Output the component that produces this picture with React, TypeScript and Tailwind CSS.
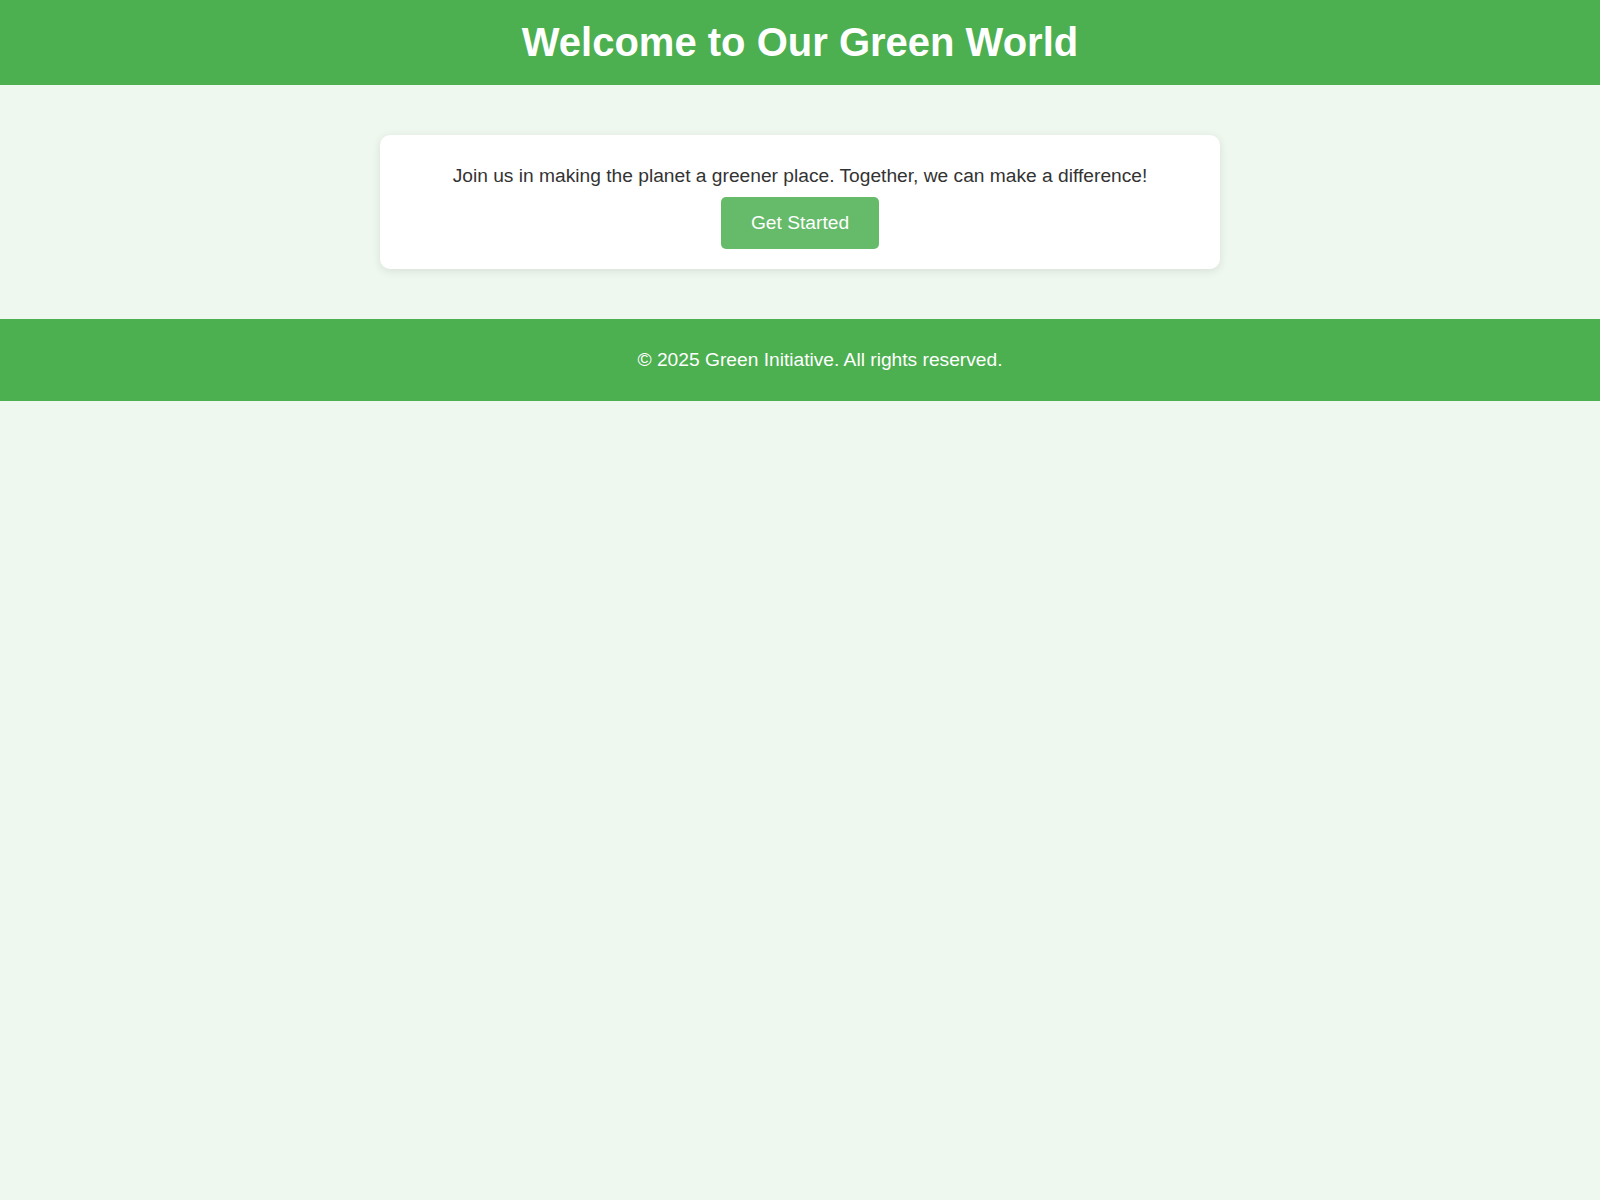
export default function App() {
  return (
    <div className="min-h-screen bg-[#eff8ef] font-['Liberation_Sans',Arial,sans-serif] text-[#333]">
      <header className="bg-[#4caf50] py-5 text-center text-white">
        <h1 className="m-0 text-[40px] font-bold leading-[45px]">Welcome to Our Green World</h1>
      </header>

      <main className="mx-auto my-[50px] w-[840px] rounded-[10px] bg-white p-5 text-center shadow-[0_2px_10px_rgba(0,0,0,0.1)]">
        <p className="my-[10px] text-[19.2px] leading-[22px]">
          Join us in making the planet a greener place. Together, we can make a difference!
        </p>
        <button className="rounded-[5px] bg-[#66bb6a] px-[30px] py-[15px] text-[19.2px] leading-[22px] text-white">
          Get Started
        </button>
      </main>

      {/* footer text sits a bit right of centre in the original */}
      <footer className="bg-[#4caf50] py-[30px] pl-[40px] text-center text-[19.2px] leading-[22px] text-white">
        © 2025 Green Initiative. All rights reserved.
      </footer>
    </div>
  );
}
